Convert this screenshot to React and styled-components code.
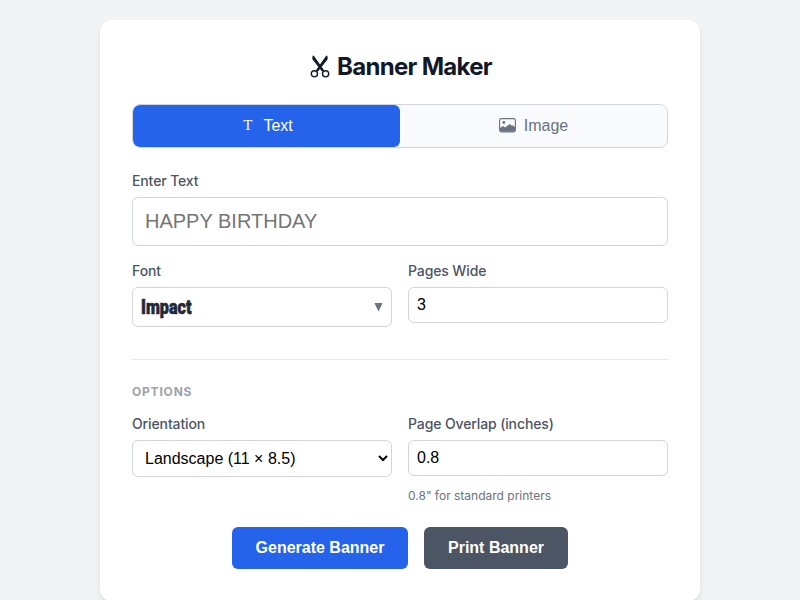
import React, { useState } from 'react';
import styled, { createGlobalStyle } from 'styled-components';

const GlobalStyle = createGlobalStyle`
  * {
    box-sizing: border-box;
  }

  body {
    margin: 0;
    padding: 20px;
    height: 600px;
    overflow: hidden;
    background: #f1f3f5;
    font-family: Inter, 'Liberation Sans', sans-serif;
    color: #111827;
  }
`;

const Card = styled.main`
  width: 600px;
  height: 581px;
  margin: 0 auto;
  padding: 32px;
  background: #ffffff;
  border-radius: 12px;
  box-shadow: 0 4px 6px -1px rgba(0, 0, 0, 0.1);
`;

const Title = styled.h1`
  display: flex;
  align-items: center;
  justify-content: center;
  gap: 7px;
  height: 29px;
  margin: 0 0 23px;
  padding-left: 2px;
  font-size: 24px;
  font-weight: 700;
  letter-spacing: -0.7px;
`;

const Tabs = styled.div`
  display: flex;
  height: 44px;
  margin-bottom: 24px;
  overflow: hidden;
  border: 1px solid #d1d5db;
  border-radius: 8px;
  background: #f8fafc;
`;

const Tab = styled.button`
  display: flex;
  flex: 1;
  align-items: center;
  justify-content: center;
  gap: 8px;
  padding: 0 0 1px;
  border: none;
  border-radius: 6px;
  background: ${({ $active }) => ($active ? '#2563eb' : '#f8fafc')};
  color: ${({ $active }) => ($active ? '#ffffff' : '#6b7280')};
  font-family: 'Liberation Sans', sans-serif;
  font-size: 16px;
  cursor: pointer;
`;

const Serif = styled.span`
  padding: 0 3px;
  font-family: 'Liberation Serif', serif;
  font-size: 15px;
`;

const Row = styled.div`
  display: grid;
  grid-template-columns: 1fr 1fr;
  gap: 16px;
`;

const Field = styled.div`
  display: flex;
  flex-direction: column;
`;

const Label = styled.label`
  height: 17px;
  margin-bottom: 8px;
  color: #4b5563;
  font-size: 14px;
  font-weight: 500;
  letter-spacing: -0.12px;
  line-height: 17px;
`;

const Input = styled.input`
  width: 100%;
  height: 36px;
  padding: 0 8px;
  border: 1px solid #d1d5db;
  border-radius: 6px;
  background: #ffffff;
  color: #000000;
  font-family: 'Liberation Sans', sans-serif;
  font-size: 16px;
  outline: none;
`;

const BannerInput = styled(Input)`
  height: 49px;
  margin-bottom: 16px;
  padding: 0 12px 1px;
  font-size: 20px;

  &::placeholder {
    color: #757575;
  }
`;

const FontPicker = styled.button`
  display: flex;
  align-items: center;
  justify-content: space-between;
  height: 40px;
  padding: 0 8px;
  border: 1px solid #d1d5db;
  border-radius: 6px;
  background: #ffffff;
  cursor: pointer;
`;

const FontName = styled.span`
  padding-top: 1px;
  color: #1f2937;
  font-family: Impact, Roboto, sans-serif;
  font-size: 19.5px;
  font-weight: 900;
  line-height: 20px;
  transform: scaleX(0.83);
  transform-origin: left center;
  -webkit-text-stroke: 0.6px #1f2937;
`;

const Select = styled.select`
  width: 100%;
  height: 37px;
  padding: 0 0 1px 8px;
  border: 1px solid #d1d5db;
  border-radius: 6px;
  background: #ffffff;
  color: #000000;
  font-family: 'Liberation Sans', sans-serif;
  font-size: 16px;
`;

const Options = styled.section`
  margin-top: 32px;
  padding-top: 24px;
  border-top: 1px solid #e5e7eb;
`;

const SectionTitle = styled.h2`
  height: 15px;
  margin: 0 0 16px;
  color: #9ca3af;
  font-size: 12px;
  font-weight: 700;
  letter-spacing: 0.8px;
  line-height: 15px;
`;

const Hint = styled.small`
  margin-top: 12px;
  color: #6b7280;
  font-size: 12px;
  line-height: 15px;
`;

const Actions = styled.div`
  display: flex;
  justify-content: center;
  gap: 16px;
  margin-top: 24px;
`;

const Button = styled.button`
  width: ${({ $width }) => $width};
  height: 42px;
  padding: 0 0 1px;
  border: none;
  border-radius: 6px;
  background: ${({ $primary }) => ($primary ? '#2563eb' : '#4b5563')};
  color: #ffffff;
  font-family: 'Liberation Sans', sans-serif;
  font-size: 16px;
  font-weight: 700;
  white-space: nowrap;
  cursor: pointer;
`;

const ScissorsIcon = () => (
  <svg width="20" height="24" viewBox="0 0 20 24" fill="none">
    <path d="M3.4 0.8 L13.6 15.2 L12.2 16.2 L3 4.4 Q2.2 2.2 3.4 0.8Z" fill="#111827" stroke="#111827" strokeWidth="0.9" />
    <path d="M16.6 0.8 L6.4 15.2 L7.8 16.2 L17 4.4 Q17.8 2.2 16.6 0.8Z" fill="#111827" stroke="#111827" strokeWidth="0.9" />
    <circle cx="4.4" cy="18.8" r="3.1" stroke="#111827" strokeWidth="1.4" />
    <circle cx="15.6" cy="18.8" r="3.1" stroke="#111827" strokeWidth="1.4" />
  </svg>
);

const ImageIcon = () => (
  <svg width="17" height="15" viewBox="0 0 17 15" fill="none">
    <rect x="0.6" y="0.6" width="15.8" height="13.3" rx="1.8" stroke="#6b7280" strokeWidth="1.1" />
    <circle cx="4.8" cy="4.5" r="1.4" fill="#6b7280" />
    <path d="M1 10 L4 8 L6 9.4 L10.8 5.9 L13 7.7 L14 7.2 L16 9.2 V12 Q16 13.6 14.4 13.6 H2.6 Q1 13.6 1 12Z" fill="#6b7280" />
  </svg>
);

const ArrowIcon = () => (
  <svg width="9" height="10" viewBox="0 0 9 10">
    <path d="M0.4 1 H8.6 L4.5 9.6Z" fill="#6b7280" />
  </svg>
);

const App = () => {
  const [mode, setMode] = useState('text');
  const [text, setText] = useState('');
  const [pages, setPages] = useState('3');
  const [overlap, setOverlap] = useState('0.8');

  return (
    <>
      <GlobalStyle />
      <Card>
        <Title>
          <ScissorsIcon />
          Banner Maker
        </Title>
        <Tabs>
          <Tab $active={mode === 'text'} onClick={() => setMode('text')}>
            <Serif>T</Serif>
            Text
          </Tab>
          <Tab $active={mode === 'image'} onClick={() => setMode('image')}>
            <ImageIcon />
            Image
          </Tab>
        </Tabs>
        <Field>
          <Label htmlFor="text">Enter Text</Label>
          <BannerInput id="text" placeholder="HAPPY BIRTHDAY" value={text} onChange={(e) => setText(e.target.value)} />
        </Field>
        <Row>
          <Field>
            <Label>Font</Label>
            <FontPicker>
              <FontName>Impact</FontName>
              <ArrowIcon />
            </FontPicker>
          </Field>
          <Field>
            <Label htmlFor="pages">Pages Wide</Label>
            <Input id="pages" value={pages} onChange={(e) => setPages(e.target.value)} />
          </Field>
        </Row>
        <Options>
          <SectionTitle>OPTIONS</SectionTitle>
          <Row>
            <Field>
              <Label htmlFor="orientation">Orientation</Label>
              <Select id="orientation" defaultValue="landscape">
                <option value="landscape">Landscape (11 × 8.5)</option>
                <option value="portrait">Portrait (8.5 × 11)</option>
              </Select>
            </Field>
            <Field>
              <Label htmlFor="overlap">Page Overlap (inches)</Label>
              <Input id="overlap" value={overlap} onChange={(e) => setOverlap(e.target.value)} />
              <Hint>0.8" for standard printers</Hint>
            </Field>
          </Row>
        </Options>
        <Actions>
          <Button $primary $width="176px">Generate Banner</Button>
          <Button $width="144px">Print Banner</Button>
        </Actions>
      </Card>
    </>
  );
};

export default App;
